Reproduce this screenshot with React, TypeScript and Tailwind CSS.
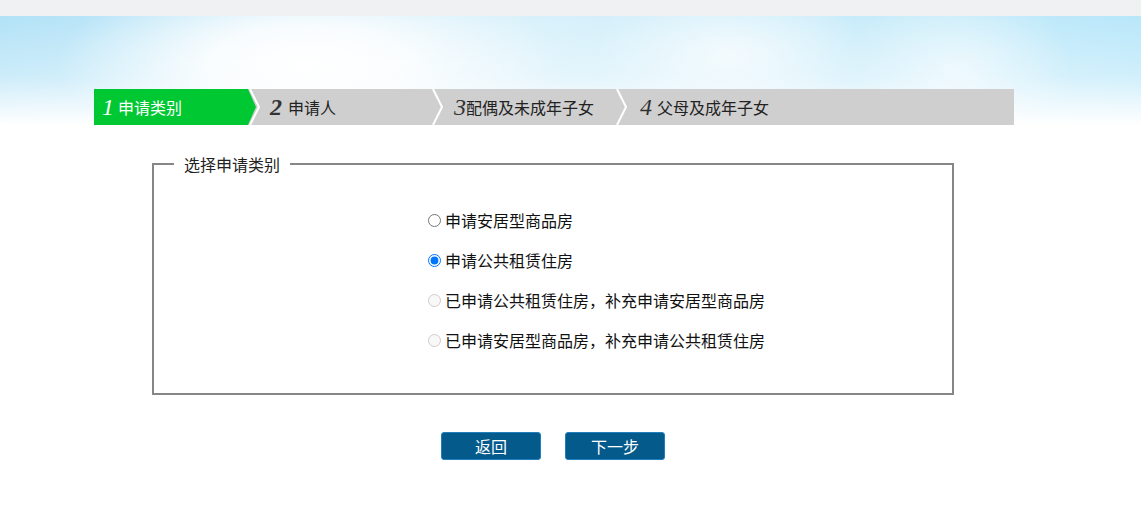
import React, { useState } from 'react';

const steps = [
  { num: '1', label: '申请类别', width: 'w-[166px]', numGap: 'mr-[4px]' },
  { num: '2', label: '申请人', width: 'w-[184px]', numGap: 'mr-[6px]' },
  { num: '3', label: '配偶及未成年子女', width: 'w-[186px]', numGap: 'mr-0' },
  { num: '4', label: '父母及成年子女', width: 'flex-1', numGap: 'mr-[5px]' },
];

const options = [
  { id: 'azf', label: '申请安居型商品房', disabled: false },
  { id: 'gzf', label: '申请公共租赁住房', disabled: false },
  { id: 'gzf-azf', label: '已申请公共租赁住房，补充申请安居型商品房', disabled: true },
  { id: 'azf-gzf', label: '已申请安居型商品房，补充申请公共租赁住房', disabled: true },
];

const Chevron: React.FC<{ left: string }> = ({ left }) => (
  <svg
    className={`absolute top-0 ${left} h-9 w-3`}
    viewBox="0 0 12 36"
    fill="none"
  >
    <polyline points="1,0 10,18 1,36" stroke="#fff" strokeWidth="2" />
  </svg>
);

const App: React.FC = () => {
  const [kind, setKind] = useState('gzf');

  return (
    <div className="min-h-screen bg-white font-['Microsoft_YaHei','Noto_Sans_CJK_SC',sans-serif] text-[#222]">
      {/* top strip */}
      <div className="h-4 bg-[#f0f1f3]" />

      {/* sky header with steps */}
      <div className="h-[109px] pt-[73px] bg-[linear-gradient(180deg,rgba(255,255,255,0)_0%,rgba(255,255,255,0.35)_55%,#ffffff_100%),radial-gradient(ellipse_22%_90%_at_27%_45%,#ffffff_0%,rgba(255,255,255,0.85)_40%,rgba(255,255,255,0)_100%),radial-gradient(ellipse_12%_70%_at_64%_35%,rgba(255,255,255,0.7)_0%,rgba(255,255,255,0)_100%),radial-gradient(ellipse_10%_80%_at_84%_50%,rgba(255,255,255,0.6)_0%,rgba(255,255,255,0)_100%),linear-gradient(90deg,#b2e2f7_0%,#d9f1fb_45%,#c9ecfa_75%,#b8e7fa_100%)]">
        <div className="relative ml-[94px] flex h-9 w-[920px] bg-[#cfcfcf]">
          {steps.map((s, i) => (
            <div
              key={s.num}
              className={`${s.width} flex h-9 items-center ${
                i === 0
                  ? 'pl-[8px] bg-[#00c832] [clip-path:polygon(0_0,154px_0,162px_50%,154px_100%,0_100%)] text-white'
                  : 'pl-[10px] text-[#222]'
              }`}
            >
              <span
                className={`${s.numGap} font-['Liberation_Serif',serif] text-[24px] italic leading-none ${
                  i === 0 ? 'font-light text-white' : i === 1 ? 'font-bold text-[#333]' : 'text-[#333]'
                }`}
              >
                {s.num}
              </span>
              <span className="text-[16px] leading-none">{s.label}</span>
            </div>
          ))}
          <Chevron left="left-[155px]" />
          <Chevron left="left-[338px]" />
          <Chevron left="left-[522px]" />
        </div>
      </div>

      {/* form */}
      <div className="ml-[152px] w-[802px]">
        <fieldset className="mt-[28px] border-2 border-[#868686] pl-[20px] pb-[33px]">
          <legend className="px-[10px] text-[16px] leading-[22px] text-[#222]">选择申请类别</legend>
          <div className="pl-[254px] pt-[25px]">
            {options.map((o) => (
              <label key={o.id} className="flex h-10 items-center text-[16px] text-[#111]">
                <input
                  type="radio"
                  name="sqlb"
                  className="m-0 h-[13px] w-[13px] accent-[#0075ff]"
                  checked={kind === o.id}
                  disabled={o.disabled}
                  onChange={() => setKind(o.id)}
                />
                <span className="ml-[4px]">{o.label}</span>
              </label>
            ))}
          </div>
        </fieldset>

        <div className="mt-[37px] flex justify-center gap-6">
          <button className="h-7 w-[100px] rounded-[3px] border border-[#1f7fbf] bg-[#045a8b] text-[16px] text-white">
            返回
          </button>
          <button className="h-7 w-[100px] rounded-[3px] border border-[#1f7fbf] bg-[#045a8b] text-[16px] text-white">
            下一步
          </button>
        </div>
      </div>
    </div>
  );
};

export default App;
